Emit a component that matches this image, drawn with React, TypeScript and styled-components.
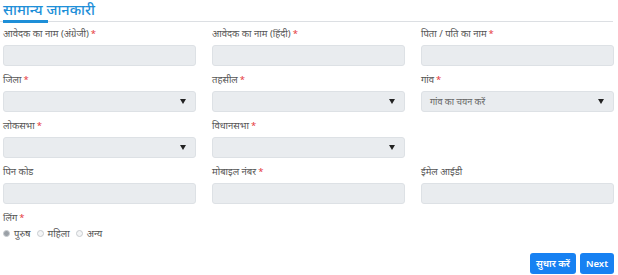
import React from "react";
import styled, { createGlobalStyle } from "styled-components";

const GlobalStyle = createGlobalStyle`
  body {
    margin: 0;
    background: #fff;
    font-family: "Noto Sans", "Lato", "DejaVu Sans", sans-serif;
  }
`;

const Page = styled.div`
  width: 618px;
  height: 275px;
  padding: 0 4px 0 3px;
  box-sizing: border-box;
  overflow: hidden;
`;

const SectionHeader = styled.div`
  position: relative;
  border-bottom: 1px solid #dcdfe3;
  height: 21px;
  margin: 0 1px 5px -3px;
`;

const Title = styled.h4`
  margin: 0 0 0 3px;
  font-size: 14.5px;
  line-height: 18px;
  font-weight: 500;
  color: #1e8fd8;
  &::after {
    content: "";
    position: absolute;
    left: 3px;
    bottom: -2px;
    width: 45px;
    height: 3px;
    background: #1e8fd8;
  }
`;

const Grid = styled.div`
  display: grid;
  grid-template-columns: repeat(3, 193px);
  column-gap: 16px;
  row-gap: 7px;
`;

const Field = styled.div`
  display: flex;
  flex-direction: column;
`;

const Label = styled.label`
  font-size: 9.5px;
  line-height: 14px;
  color: #555;
  margin-bottom: 4px;
`;

const Star = styled.span`
  color: #e5383b;
  margin-left: 2px;
`;

const Input = styled.div`
  height: 21px;
  box-sizing: border-box;
  background: #e9ecef;
  border: 1px solid #dde1e5;
  border-radius: 3px;
`;

const Select = styled(Input)<{ $muted?: boolean }>`
  display: flex;
  align-items: center;
  justify-content: space-between;
  padding: 0 9px 0 8px;
  font-size: 9px;
  color: ${(p) => (p.$muted ? "#666" : "transparent")};
`;

const Arrow = styled.span`
  width: 0;
  height: 0;
  border-left: 3px solid transparent;
  border-right: 3px solid transparent;
  border-top: 5px solid #222;
`;

const RadioRow = styled.div`
  display: flex;
  align-items: center;
  gap: 6px;
  font-size: 9.5px;
  color: #555;
  margin-top: -2px;
`;

const RadioItem = styled.span`
  display: flex;
  align-items: center;
  gap: 4px;
`;

const Dot = styled.span<{ $on?: boolean }>`
  width: 5px;
  height: 5px;
  border-radius: 50%;
  border: 1px solid #c8ccd0;
  background: ${(p) => (p.$on ? "#9aa0a6" : "#f4f5f6")};
`;

const Actions = styled.div`
  display: flex;
  justify-content: flex-end;
  gap: 4px;
  margin-top: 13px;
`;

const Button = styled.button`
  height: 21px;
  padding: 0 6px;
  border: none;
  border-radius: 3px;
  background: #1781f2;
  color: #fff;
  font-family: inherit;
  font-size: 9.5px;
  font-weight: 600;
`;

const Req = () => <Star>*</Star>;

const App = () => {
  return (
    <Page>
      <GlobalStyle />
      <SectionHeader>
        <Title>सामान्य जानकारी</Title>
      </SectionHeader>
      <Grid>
        <Field>
          <Label>आवेदक का नाम (अंग्रेजी)<Req /></Label>
          <Input />
        </Field>
        <Field>
          <Label>आवेदक का नाम (हिंदी)<Req /></Label>
          <Input />
        </Field>
        <Field>
          <Label>पिता / पति का नाम<Req /></Label>
          <Input />
        </Field>

        <Field>
          <Label>जिला<Req /></Label>
          <Select><span /><Arrow /></Select>
        </Field>
        <Field>
          <Label>तहसील<Req /></Label>
          <Select><span /><Arrow /></Select>
        </Field>
        <Field>
          <Label>गांव<Req /></Label>
          <Select $muted><span>गांव का चयन करें</span><Arrow /></Select>
        </Field>

        <Field>
          <Label>लोकसभा<Req /></Label>
          <Select><span /><Arrow /></Select>
        </Field>
        <Field>
          <Label>विधानसभा<Req /></Label>
          <Select><span /><Arrow /></Select>
        </Field>
        <div />

        <Field>
          <Label>पिन कोड</Label>
          <Input />
        </Field>
        <Field>
          <Label>मोबाइल नंबर<Req /></Label>
          <Input />
        </Field>
        <Field>
          <Label>ईमेल आईडी</Label>
          <Input />
        </Field>

        <Field>
          <Label>लिंग<Req /></Label>
          <RadioRow>
            <RadioItem><Dot $on />पुरुष</RadioItem>
            <RadioItem><Dot />महिला</RadioItem>
            <RadioItem><Dot />अन्य</RadioItem>
          </RadioRow>
        </Field>
      </Grid>
      <Actions>
        <Button>सुधार करें</Button>
        <Button>Next</Button>
      </Actions>
    </Page>
  );
};

export default App;
